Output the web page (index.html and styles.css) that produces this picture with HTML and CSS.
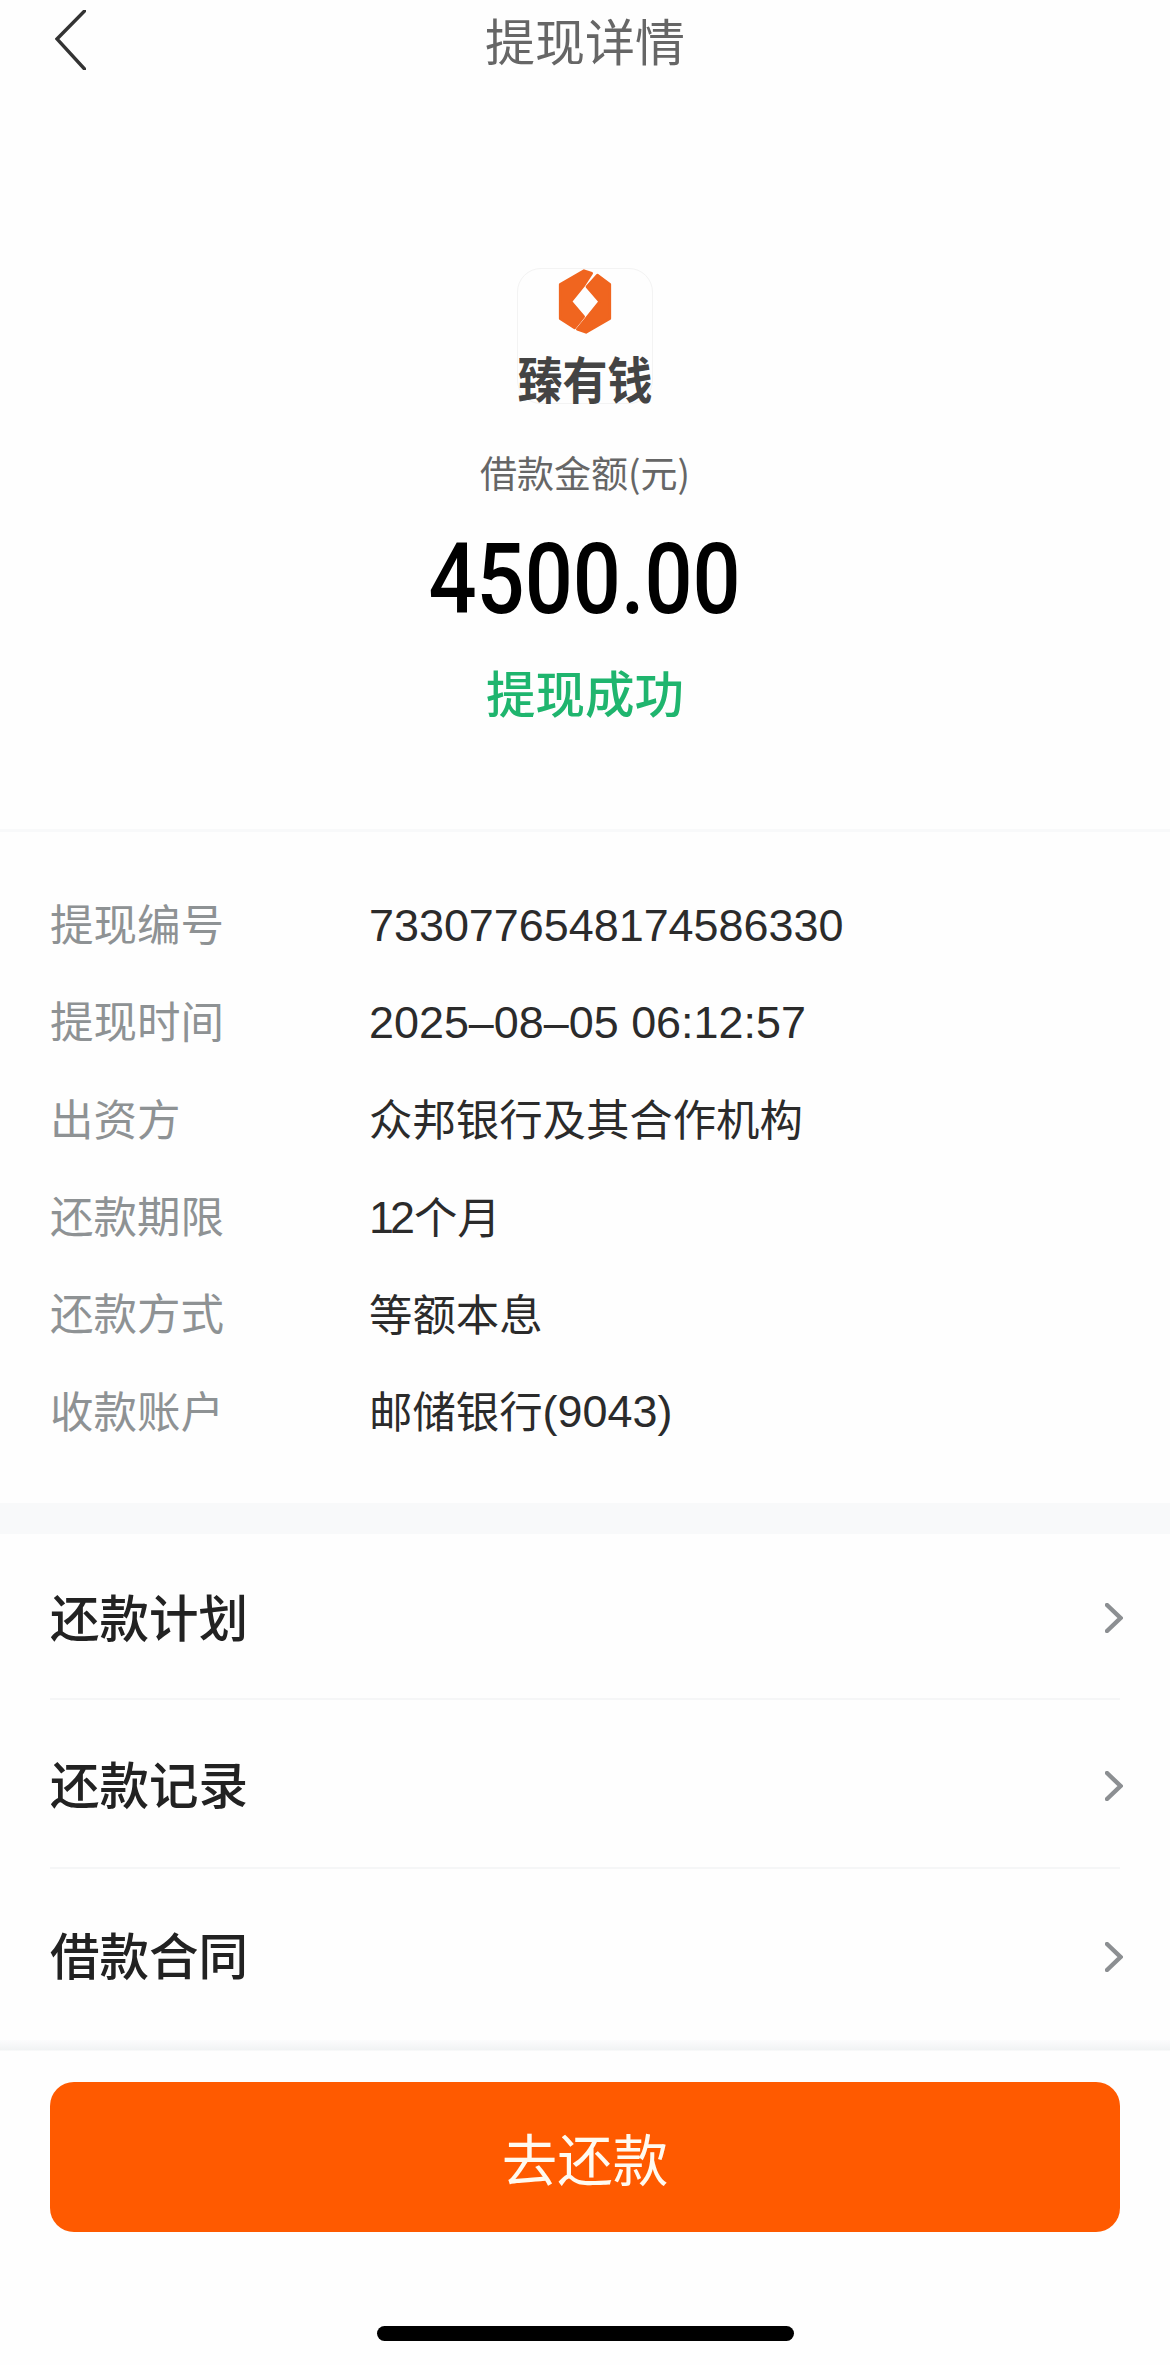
FILE: index.html
```html
<!DOCTYPE html>
<html lang="zh-CN">
<head>
<meta charset="utf-8">
<title>提现详情</title>
<link rel="stylesheet" href="styles.css">
</head>
<body>
<div class="page">
  <header class="topbar">
    <svg class="back" viewBox="0 0 30 60" aria-hidden="true"><path d="M29 1 L1.5 29 L29 59"/></svg>
    <h1 class="title">提现详情</h1>
  </header>

  <section class="hero">
    <div class="logo">
      <svg class="logo-mark" viewBox="475 88 160 194" aria-hidden="true">
        <path d="M552 93 L575 101 L551 138 L513 185 L551 230 L524 264 L481 236 L481 134 Z"/>
        <path d="M592 106 L629 134 L629 236 L558 277 L532 268 L560 234 L599 185 L561 141 Z"/>
      </svg>
      <span class="logo-name">臻有钱</span>
    </div>
    <p class="amount-label">借款金额(元)</p>
    <p class="amount">4500.00</p>
    <p class="status">提现成功</p>
  </section>

  <section class="details">
    <div class="detail-row"><span class="detail-key">提现编号</span><span class="detail-value"><span class="num">7330776548174586330</span></span></div>
    <div class="detail-row"><span class="detail-key">提现时间</span><span class="detail-value"><span class="num">2025–08–05 06:12:57</span></span></div>
    <div class="detail-row"><span class="detail-key">出资方</span><span class="detail-value">众邦银行及其合作机构</span></div>
    <div class="detail-row"><span class="detail-key">还款期限</span><span class="detail-value"><span class="num tight">12</span>个月</span></div>
    <div class="detail-row"><span class="detail-key">还款方式</span><span class="detail-value">等额本息</span></div>
    <div class="detail-row"><span class="detail-key">收款账户</span><span class="detail-value">邮储银行<span class="num">(9043)</span></span></div>
  </section>

  <div class="band"></div>

  <nav class="menu">
    <div class="menu-row"><span class="menu-label">还款计划</span><svg class="chevron" viewBox="0 0 18 30" aria-hidden="true"><path d="M2 2 L15.5 15 L2 28"/></svg></div>
    <div class="menu-row"><span class="menu-label">还款记录</span><svg class="chevron" viewBox="0 0 18 30" aria-hidden="true"><path d="M2 2 L15.5 15 L2 28"/></svg></div>
    <div class="menu-row"><span class="menu-label">借款合同</span><svg class="chevron" viewBox="0 0 18 30" aria-hidden="true"><path d="M2 2 L15.5 15 L2 28"/></svg></div>
  </nav>

  <footer class="footer">
    <button class="repay" type="button">去还款</button>
    <div class="home-bar"></div>
  </footer>
</div>
</body>
</html>
```

FILE: styles.css
```css
* { box-sizing: border-box; }
html, body { margin: 0; padding: 0; background: #fefefe; }
body { font-family: "Liberation Sans", "Noto Sans CJK SC", sans-serif; }
p, h1 { margin: 0; }

.page { width: 1170px; height: 2365px; overflow: hidden; display: flex; flex-direction: column; }

.topbar { height: 82px; display: flex; justify-content: center; position: relative; }
.back { position: absolute; left: 55px; top: 10px; width: 31px; height: 60px; }
.back path { fill: none; stroke: #333; stroke-width: 3.4; stroke-linecap: round; stroke-linejoin: miter; }
.title { font-family: "Noto Sans CJK SC", sans-serif; font-size: 50px; font-weight: 400; line-height: 78px; color: #666; }

.hero { height: 750px; display: flex; flex-direction: column; align-items: center; border-bottom: 3px solid #f8f9fa; padding-top: 186px; }
.logo { width: 136px; height: 136px; border: 1px solid #f3f3f3; border-radius: 24px; display: flex; flex-direction: column; align-items: center; }
.logo-mark { width: 54px; height: 65px; flex: none; margin-bottom: 21px; }
.logo-mark path { fill: #f0651f; stroke: #f0651f; stroke-width: 8; stroke-linejoin: round; }
.logo-name { font-family: "Noto Sans CJK SC", sans-serif; font-size: 45px; font-weight: 700; line-height: 46px; color: #444; white-space: nowrap; transform: scaleY(1.1); }
.amount-label { font-family: "Noto Sans CJK SC", sans-serif; margin-top: 44px; font-size: 37px; line-height: 48px; color: #666; }
.amount { font-family: Roboto, sans-serif; margin-top: 25px; font-size: 99px; font-weight: 500; line-height: 116px; color: #000; transform: scaleX(.855); }
.status { font-family: "Noto Sans CJK SC", sans-serif; margin-top: 20px; font-size: 49.5px; font-weight: 500; line-height: 70px; color: #1fb56e; }

.details { height: 671px; padding: 42px 50px 0; flex: none; }
.detail-row { height: 97.3px; display: flex; align-items: center; }
.detail-key { width: 319px; flex: none; font-family: "Noto Sans CJK SC", sans-serif; font-size: 43.5px; color: #8e9294; }
.detail-value { font-family: "Noto Sans CJK SC", sans-serif; font-size: 43.4px; color: #2b2b2b; white-space: nowrap; }
.num { font-family: "Liberation Sans", sans-serif; font-size: 44.9px; position: relative; top: -1px; }
.tight { letter-spacing: -4px; margin-right: 3px; }

.band { height: 31px; background: #f8f9fa; flex: none; }

.menu { padding: 0 50px; height: 506px; flex: none; }
.menu-row { height: 166px; display: flex; align-items: center; justify-content: space-between; border-bottom: 2px solid #f5f6f7; }
.menu-row + .menu-row { height: 169px; }
.menu-row:last-child { border-bottom: 0; height: 171px; }
.menu-label { font-family: "Noto Sans CJK SC", sans-serif; font-size: 49.5px; font-weight: 500; color: #222; position: relative; top: -1px; }
.chevron { width: 18px; height: 30px; margin-right: -3px; position: relative; top: 2px; }
.chevron path { fill: none; stroke: #8c8f92; stroke-width: 4.4; stroke-linecap: round; }

.footer { flex: 1; padding: 42px 50px 0; display: flex; flex-direction: column; align-items: center; background: linear-gradient(#fcfcfd 0, #f1f3f4 10px, #fefefe 11px); }
.repay { width: 100%; height: 150px; flex: none; border: 0; border-radius: 24px; background: #ff5a00; color: #fffaf0; font-family: "Noto Sans CJK SC", sans-serif; font-size: 55.5px; font-weight: 400; }
.home-bar { width: 417px; height: 15px; margin-top: 94px; border-radius: 8px; background: #000; }
```
